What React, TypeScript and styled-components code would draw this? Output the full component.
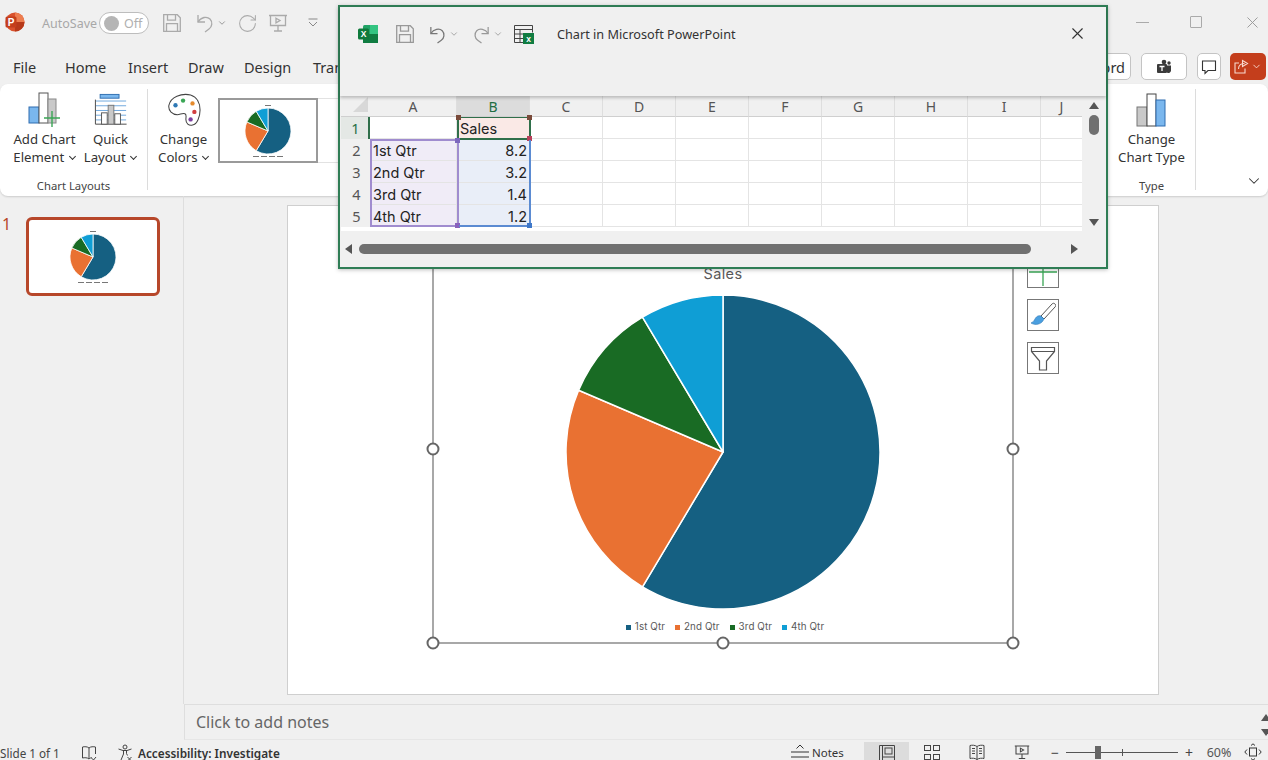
import React from 'react';
import styled, { createGlobalStyle } from 'styled-components';
import { ChevronDown, RotateCw, X } from 'lucide-react';

const UI_FONT = '"Noto Sans", "Open Sans", sans-serif';

const GlobalStyle = createGlobalStyle`
    html, body {
        margin: 0;
        padding: 0;
        background: #f0f0f0;
        overflow: hidden;
    }
    * {
        box-sizing: border-box;
    }
`;

const SALES = [
    { label: '1st Qtr', value: 8.2, color: '#156082' },
    { label: '2nd Qtr', value: 3.2, color: '#e97132' },
    { label: '3rd Qtr', value: 1.4, color: '#196b24' },
    { label: '4th Qtr', value: 1.2, color: '#0f9ed5' },
];

const COLUMNS = ['A', 'B', 'C', 'D', 'E', 'F', 'G', 'H', 'I', 'J'];

const SHEET_ROWS = [
    ['', 'Sales'],
    ['1st Qtr', '8.2'],
    ['2nd Qtr', '3.2'],
    ['3rd Qtr', '1.4'],
    ['4th Qtr', '1.2'],
];

function slicePaths(radius: number) {
    const total = SALES.reduce((sum, s) => sum + s.value, 0);
    let angle = 0;
    return SALES.map(s => {
        const start = angle;
        angle += (s.value / total) * Math.PI * 2;
        const x1 = radius * Math.sin(start);
        const y1 = -radius * Math.cos(start);
        const x2 = radius * Math.sin(angle);
        const y2 = -radius * Math.cos(angle);
        const large = angle - start > Math.PI ? 1 : 0;
        return { color: s.color, d: `M0 0L${x1} ${y1}A${radius} ${radius} 0 ${large} 1 ${x2} ${y2}Z` };
    });
}

function Pie({ radius, stroke }: { radius: number; stroke: number }) {
    const size = radius * 2 + 2;
    return (
        <svg width={size} height={size} viewBox={`${-size / 2} ${-size / 2} ${size} ${size}`}>
            {slicePaths(radius).map(p => (
                <path key={p.color} d={p.d} fill={p.color} stroke="#fff" strokeWidth={stroke} strokeLinejoin="round" />
            ))}
        </svg>
    );
}

function MiniChart({ radius }: { radius: number }) {
    return (
        <MiniChartBox>
            <MiniDash />
            <Pie radius={radius} stroke={0.8} />
            <MiniLegend>
                <MiniDash /><MiniDash /><MiniDash /><MiniDash />
            </MiniLegend>
        </MiniChartBox>
    );
}

function PowerPointLogo() {
    return (
        <svg width="22" height="22" viewBox="0 0 22 22">
            <circle cx="11" cy="11" r="9.5" fill="#d9512c" />
            <path d="M11 1.5a9.5 9.5 0 0 1 9.5 9.5H11z" fill="#ed7d4f" />
            <path d="M11 11h9.5A9.5 9.5 0 0 1 11 20.5z" fill="#b7391a" />
            <rect x="1.5" y="5.5" width="11" height="11" rx="1.5" fill="#c43e1c" />
            <text x="7" y="14.5" textAnchor="middle" fontSize="10" fontWeight="700" fill="#fff" fontFamily="Liberation Sans">P</text>
        </svg>
    );
}

function SaveIcon({ color }: { color: string }) {
    return (
        <svg width="20" height="20" viewBox="0 0 20 20" fill="none" stroke={color} strokeWidth="1.3">
            <path d="M1.7 1.7h13.6l3 3v13.6H1.7z" />
            <path d="M5.5 1.7v5.5h8V1.7M4.5 18.3v-7.6h11v7.6" />
        </svg>
    );
}

function UndoIcon({ color, size, mirror }: { color: string; size: number; mirror?: boolean }) {
    return (
        <svg width={size} height={size} viewBox="0 0 20 20" fill="none" stroke={color} strokeWidth="1.3">
            <g transform={mirror ? 'matrix(-1 0 0 1 20 0)' : undefined}>
                <path d="M3 2v7h7" />
                <path d="M3 9C6 4 12 3 15 6c3 3 2 8-1 10l-4 3" />
            </g>
        </svg>
    );
}

function PresentIcon({ color, size }: { color: string; size: number }) {
    return (
        <svg width={size} height={size} viewBox="0 0 20 20" fill="none" stroke={color} strokeWidth="1.3">
            <path d="M1 2.5h18M2.5 2.5v10h15v-10M10 12.5v5M6 18h8" />
            <path d="M8 5.2l4 2.3-4 2.3z" />
        </svg>
    );
}

function CustomizeIcon() {
    return (
        <svg width="12" height="10" viewBox="0 0 12 10" fill="none" stroke="#888" strokeWidth="1">
            <path d="M1.500 1h9M2 4l4 4 4-4" />
        </svg>
    );
}

function AddChartIcon() {
    return (
        <svg width="36" height="36" viewBox="0 0 36 36">
            <rect x="2" y="16" width="10" height="16" fill="#7ab7ee" stroke="#2f6db0" />
            <rect x="12" y="2" width="9" height="30" fill="#fff" stroke="#555" />
            <rect x="21" y="8" width="8" height="24" fill="#c9c9c9" stroke="#888" />
            <path d="M25 20v16M17 27h16" stroke="#3aa655" strokeWidth="1.4" />
        </svg>
    );
}

function QuickLayoutIcon() {
    return (
        <svg width="34" height="34" viewBox="0 0 36 36" fill="none">
            <rect x="6.5" y="1.500" width="20" height="4" fill="#7ab7ee" stroke="#2f6db0" />
            <path d="M2 8.500h32M2 13.500h32M2 18.500h32M2 23.500h32M2 28.500h32" stroke="#6aa5dc" />
            <path d="M1.500 7v26h33" stroke="#444" />
            <rect x="8" y="21" width="6" height="12" fill="#fff" stroke="#555" />
            <rect x="15" y="13" width="6" height="20" fill="#c9c9c9" stroke="#777" />
            <rect x="22" y="22" width="6" height="11" fill="#fff" stroke="#555" />
        </svg>
    );
}

function PaletteIcon() {
    return (
        <svg width="34" height="34" viewBox="0 0 36 36">
            <path
                d="M2 13C4 4 15 0 25 2c7 2 10 9 10 16 0 7-3 15-8 16-4 1-7-2-7-6 0-3 1-5-1-6-3-1-5 1-8 1-5 0-10-4-9-10z"
                fill="#fff"
                stroke="#444"
                strokeWidth="1.1"
            />
            <circle cx="9" cy="13" r="2.300" fill="#2f79b5" />
            <circle cx="17" cy="8" r="2.300" fill="#3aa655" />
            <circle cx="27" cy="11" r="2.300" fill="#e58a2c" />
            <circle cx="29" cy="20" r="2.300" fill="#d23f3f" />
            <circle cx="25" cy="28" r="2.300" fill="#7b3fa0" />
        </svg>
    );
}

function ChangeTypeIcon() {
    return (
        <svg width="32" height="34" viewBox="0 0 32 34">
            <rect x="1" y="14" width="10" height="19" fill="#c9c9c9" stroke="#777" />
            <rect x="11" y="1" width="9" height="32" fill="#fff" stroke="#444" />
            <rect x="20" y="7" width="9" height="26" fill="#7ab7ee" stroke="#2f6db0" />
        </svg>
    );
}

function TeamsIcon() {
    return (
        <svg width="16" height="16" viewBox="0 0 16 16" fill="#3b3b3b">
            <circle cx="8" cy="3" r="2.300" />
            <circle cx="13" cy="4" r="1.700" />
            <path d="M10 6.500h5v5a2.500 2.500 0 0 1-4 2z" />
            <rect x="1" y="5" width="10" height="9" rx="1" />
            <path d="M3.500 7.500h5M6 7.500v4.500" stroke="#fff" strokeWidth="1.300" />
        </svg>
    );
}

function CommentIcon() {
    return (
        <svg width="16" height="16" viewBox="0 0 16 16" fill="none" stroke="#333" strokeWidth="1.1">
            <path d="M1.500 2h13v9.500H7l-3 3v-3H1.500z" />
        </svg>
    );
}

function ShareIcon() {
    return (
        <svg width="15" height="15" viewBox="0 0 15 15" fill="none" stroke="#f7d9cf" strokeWidth="1.1">
            <path d="M5 4H1v10h10V9.500" />
            <path d="M4.500 10c0-4 3-5.500 6-5.500M8.500 1.500l5 3-5 3z" />
        </svg>
    );
}

function ExcelLogo() {
    return (
        <svg width="20" height="20" viewBox="0 0 20 20">
            <rect x="5" y="1" width="15" height="18" rx="1.500" fill="#21a366" />
            <rect x="12" y="1" width="8" height="9" fill="#33c481" />
            <rect x="5" y="10" width="15" height="9" fill="#107c41" />
            <rect x="0" y="4.500" width="11" height="11" rx="1.500" fill="#0f7a3c" />
            <text x="5.500" y="13" textAnchor="middle" fontSize="8.500" fontWeight="700" fill="#fff" fontFamily="Liberation Sans">X</text>
        </svg>
    );
}

function SheetObjectIcon() {
    return (
        <svg width="20" height="20" viewBox="0 0 20 20" fill="none" stroke="#444" strokeWidth="1">
            <path d="M.5 18.500V1.500h18v7M.5 5.500h18M.5 10h9M.5 14.500h9M6 5.500v13M.5 18.500h9" />
            <rect x="9" y="9" width="11" height="11" fill="#107c41" stroke="none" />
            <text x="14.500" y="17.500" textAnchor="middle" fontSize="8.500" fontWeight="700" fill="#fff" stroke="none" fontFamily="Liberation Sans">x</text>
        </svg>
    );
}

function BrushIcon() {
    return (
        <svg width="26" height="26" viewBox="0 0 26 26">
            <path d="M25 2c-1-1-2-1-3 0L11 14l3 3L25 5c1-1 1-2 0-3z" fill="#fff" stroke="#555" />
            <path d="M11 14c-3-1-5 1-6 3-1 2-2 3-4 4 3 2 8 2 11-1 2-2 2-4 2-3z" fill="#4a9fe0" stroke="#2f79b5" strokeWidth=".6" />
        </svg>
    );
}

function FunnelIcon() {
    return (
        <svg width="26" height="26" viewBox="0 0 26 26" fill="none" stroke="#555" strokeWidth="1.200">
            <path d="M1.500 2.500h23v4l-8 9.500v9h-7v-9l-8-9.500zM1.500 6.500h23" />
        </svg>
    );
}

function BookIcon() {
    return (
        <svg width="16" height="16" viewBox="0 0 16 16" fill="none" stroke="#444" strokeWidth="1">
            <path d="M8 3C6.500 1.500 3.500 1.500 1.500 2v11c2-.5 5-.5 6.500 1 1-1 2-1.300 3-1.400M8 3c1.500-1.500 4.500-1.500 6.500-1v7M8 3v11" />
            <path d="M10.500 13l2 2 2.500-3" />
        </svg>
    );
}

function AccessibilityIcon() {
    return (
        <svg width="18" height="18" viewBox="0 0 18 18" fill="none" stroke="#444" strokeWidth="1">
            <circle cx="8" cy="3" r="2" />
            <path d="M1.500 5l4.500 1.500h4L14.500 5M6.500 6.500v3.500l-2.500 6M9.500 6.500v3l1 2" />
            <path d="M10.500 13l4 4M14.500 13l-4 4" />
        </svg>
    );
}

function NotesIcon() {
    return (
        <svg width="18" height="16" viewBox="0 0 18 16" fill="none" stroke="#333" strokeWidth="1">
            <path d="M5.500 4.500L9 1l3.500 3.500M0 8h18M0 13h18" />
        </svg>
    );
}

function NormalViewIcon() {
    return (
        <svg width="16" height="16" viewBox="0 0 16 16" fill="none" stroke="#444" strokeWidth="1">
            <path d="M.5 1.500h15v16H.5zM3.500 1.500v16M3.500 13h12" />
            <rect x="6" y="4" width="7" height="6" />
        </svg>
    );
}

function SorterIcon() {
    return (
        <svg width="16" height="16" viewBox="0 0 16 16" fill="none" stroke="#444" strokeWidth="1">
            <rect x=".5" y="1.500" width="6" height="5" />
            <rect x="9.500" y="1.500" width="6" height="5" />
            <rect x=".5" y="10.500" width="6" height="5" />
            <rect x="9.500" y="10.500" width="6" height="5" />
        </svg>
    );
}

function ReadingIcon() {
    return (
        <svg width="16" height="16" viewBox="0 0 16 16" fill="none" stroke="#444" strokeWidth="1">
            <path d="M8 2.500C6 1 3 1 1 1.500v13c2-.5 5-.5 7 1 2-1.500 5-1.500 7-1v-13c-2-.5-5-.5-7 1zM8 2.500v13" />
            <path d="M3 4.500h3M3 7h3M3 9.500h3M10 4.500h3M10 7h3M10 9.500h3" />
        </svg>
    );
}

function FitIcon() {
    return (
        <svg width="18" height="18" viewBox="0 0 18 18" fill="none" stroke="#333" strokeWidth="1">
            <rect x="5.500" y="5" width="7" height="8" />
            <path d="M3 6.500L.8 9 3 11.500M15 6.500L17.200 9 15 11.500M7 2.500L9 .8l2 1.700M7 15.500L9 17.200l2-1.700" />
        </svg>
    );
}

export default function App() {
    return (
        <Page>
            <GlobalStyle />
            <TitleBar>
                <LogoSlot><PowerPointLogo /></LogoSlot>
                <AutoSaveLabel>AutoSave</AutoSaveLabel>
                <Toggle><ToggleKnob /><ToggleText>Off</ToggleText></Toggle>
                <QuickTools>
                    <SaveIcon color="#aaa" />
                    <UndoPair>
                        <UndoIcon color="#aaa" size={20} />
                        <ChevronDown size={10} color="#888" />
                    </UndoPair>
                    <RotateCw size={21} color="#aaa" strokeWidth={1.2} />
                    <PresentIcon color="#aaa" size={20} />
                    <CustomizeSlot><CustomizeIcon /></CustomizeSlot>
                </QuickTools>
                <WindowControls>
                    <MinimizeMark />
                    <MaximizeMark />
                    <X size={19} color="#999" strokeWidth={1.2} />
                </WindowControls>
            </TitleBar>

            <TabBar>
                <Tabs>
                    <Tab $width={52}>File</Tab>
                    <Tab $width={63}>Home</Tab>
                    <Tab $width={60}>Insert</Tab>
                    <Tab $width={56}>Draw</Tab>
                    <Tab $width={69}>Design</Tab>
                    <Tab $width={90}>Transitions</Tab>
                </Tabs>
                <TabActions>
                    <RecordButton $width={70}>Record</RecordButton>
                    <ActionButton $width={46}><TeamsIcon /></ActionButton>
                    <ActionButton $width={24}><CommentIcon /></ActionButton>
                    <ShareButton><ShareIcon /><ChevronDown size={11} color="#f7d9cf" /></ShareButton>
                </TabActions>
            </TabBar>

            <Ribbon>
                <RibbonGroup $width={148}>
                    <RibbonButtons>
                        <RibbonButton $width={74}>
                            <IconSlot><AddChartIcon /></IconSlot>
                            <ButtonLabel>Add Chart<br />Element <Caret /></ButtonLabel>
                        </RibbonButton>
                        <RibbonButton $width={58}>
                            <IconSlot><QuickLayoutIcon /></IconSlot>
                            <ButtonLabel>Quick<br />Layout <Caret /></ButtonLabel>
                        </RibbonButton>
                    </RibbonButtons>
                    <GroupLabel>Chart Layouts</GroupLabel>
                </RibbonGroup>
                <StylesGroup>
                    <RibbonButton $width={69}>
                        <IconSlot><PaletteIcon /></IconSlot>
                        <ButtonLabel>Change<br />Colors <Caret /></ButtonLabel>
                    </RibbonButton>
                    <Gallery>
                        <GalleryItem><MiniChart radius={23} /></GalleryItem>
                    </Gallery>
                </StylesGroup>
                <RibbonGroup $width={88}>
                    <RibbonButtons>
                        <RibbonButton $width={80}>
                            <IconSlot><ChangeTypeIcon /></IconSlot>
                            <ButtonLabel>Change<br />Chart Type</ButtonLabel>
                        </RibbonButton>
                    </RibbonButtons>
                    <GroupLabel>Type</GroupLabel>
                </RibbonGroup>
                <CollapseSlot><ChevronDown size={18} color="#333" strokeWidth={1.4} /></CollapseSlot>
            </Ribbon>

            <Workspace>
                <ThumbPane>
                    <ThumbNumber>1</ThumbNumber>
                    <Thumb><MiniChart radius={23} /></Thumb>
                </ThumbPane>
                <Editor>
                    <Slide>
                        <ChartFrame>
                            <ChartTitle>Sales</ChartTitle>
                            <PieSlot><Pie radius={157} stroke={1.5} /></PieSlot>
                            <Legend>
                                {SALES.map(s => (
                                    <LegendItem key={s.label}>
                                        <LegendSwatch $color={s.color} />
                                        {s.label}
                                    </LegendItem>
                                ))}
                            </Legend>
                            <Handle $x={0} $y={0.5} />
                            <Handle $x={1} $y={0.5} />
                            <Handle $x={0} $y={1} />
                            <Handle $x={0.5} $y={1} />
                            <Handle $x={1} $y={1} />
                        </ChartFrame>
                        <ChartTools>
                            <ChartTool>
                                <svg width="30" height="30" viewBox="0 0 30 30" stroke="#3aa655" strokeWidth="1.3">
                                    <path d="M15 1v28M1 15h28" />
                                </svg>
                            </ChartTool>
                            <ChartTool><BrushIcon /></ChartTool>
                            <ChartTool><FunnelIcon /></ChartTool>
                        </ChartTools>
                    </Slide>
                </Editor>
            </Workspace>

            <NotesPane>
                Click to add notes
                <NotesScroll>
                    <ScrollArrow $dir="up" />
                    <ScrollArrow $dir="down" />
                </NotesScroll>
            </NotesPane>

            <StatusBar>
                <StatusLeft>
                    <SlideCount>Slide 1 of 1</SlideCount>
                    <BookSlot><BookIcon /></BookSlot>
                    <AccessibilityIcon />
                    <AccessibilityText>Accessibility: Investigate</AccessibilityText>
                </StatusLeft>
                <StatusRight>
                    <NotesToggle><NotesIcon />Notes</NotesToggle>
                    <ViewButton $active><NormalViewIcon /></ViewButton>
                    <ViewButton><SorterIcon /></ViewButton>
                    <ViewButton><ReadingIcon /></ViewButton>
                    <ViewButton><PresentIcon color="#444" size={16} /></ViewButton>
                    <ZoomSign>−</ZoomSign>
                    <ZoomTrack>
                        <ZoomTick />
                        <ZoomThumb />
                    </ZoomTrack>
                    <ZoomSign>+</ZoomSign>
                    <ZoomValue>60%</ZoomValue>
                    <FitIcon />
                </StatusRight>
            </StatusBar>

            <ExcelWindow>
                <ExcelTitleBar>
                    <ExcelTools>
                        <ExcelLogo />
                        <SaveIcon color="#999" />
                        <ToolPair>
                            <UndoIcon color="#777" size={19} />
                            <ChevronDown size={10} color="#999" />
                        </ToolPair>
                        <ToolPair>
                            <UndoIcon color="#999" size={19} mirror />
                            <ChevronDown size={10} color="#999" />
                        </ToolPair>
                        <SheetObjectIcon />
                    </ExcelTools>
                    <ExcelTitle>Chart in Microsoft PowerPoint</ExcelTitle>
                    <X size={19} color="#333" strokeWidth={1.4} />
                </ExcelTitleBar>
                <SheetArea>
                    <Sheet>
                        <CornerCell />
                        {COLUMNS.map(c => (
                            <ColumnHeader key={c} $active={c === 'B'}>{c}</ColumnHeader>
                        ))}
                        {SHEET_ROWS.map((row, r) => (
                            <React.Fragment key={r}>
                                <RowHeader $active={r === 0}>{r + 1}</RowHeader>
                                {COLUMNS.map((c, i) => (
                                    <Cell
                                        key={c}
                                        $tone={r === 0 ? (i === 1 ? 'pink' : 'none') : i === 0 ? 'purple' : i === 1 ? 'blue' : 'none'}
                                        $right={i === 1 && r > 0}
                                    >
                                        {row[i] ?? ''}
                                    </Cell>
                                ))}
                            </React.Fragment>
                        ))}
                        <SeriesRange>
                            <RangeCorner $side="left" $edge="top" $color="#7a4a3a" />
                            <RangeCorner $side="right" $edge="top" $color="#7a4a3a" />
                            <RangeCorner $side="right" $edge="bottom" $color="#b8405a" />
                        </SeriesRange>
                        <CategoryRange>
                            <RangeCorner $side="right" $edge="top" $color="#7d68bd" />
                            <RangeCorner $side="right" $edge="bottom" $color="#8a62bd" />
                        </CategoryRange>
                        <ValueRange>
                            <RangeCorner $side="right" $edge="bottom" $color="#3f78c9" />
                        </ValueRange>
                    </Sheet>
                    <VerticalScroll>
                        <ScrollArrow $dir="up" />
                        <VerticalThumb />
                        <ScrollSpacer />
                        <ScrollArrow $dir="down" />
                    </VerticalScroll>
                </SheetArea>
                <HorizontalScroll>
                    <ScrollArrow $dir="left" />
                    <HorizontalThumb />
                    <ScrollArrow $dir="right" />
                </HorizontalScroll>
            </ExcelWindow>
        </Page>
    );
}

const Page = styled.div`
    position: relative;
    width: 1268px;
    height: 760px;
    display: flex;
    flex-direction: column;
    overflow: hidden;
    background: #f0f0f0;
    font-family: ${UI_FONT};
    color: #333;
`;

const TitleBar = styled.div`
    height: 52px;
    flex: none;
    display: flex;
    align-items: center;
    padding: 0 6px 6px 4px;
`;

const LogoSlot = styled.div`
    width: 38px;
    margin-top: -2px;
    display: flex;
`;

const AutoSaveLabel = styled.span`
    width: 57px;
    font-size: 12.5px;
    color: #a8a8a8;
`;

const Toggle = styled.div`
    width: 50px;
    height: 22px;
    display: flex;
    align-items: center;
    gap: 5px;
    padding-left: 4px;
    background: #fff;
    border: 1px solid #bdbdbd;
    border-radius: 11px;
`;

const ToggleKnob = styled.div`
    width: 15px;
    height: 15px;
    border-radius: 50%;
    background: #b5b5b5;
`;

const ToggleText = styled.span`
    font-size: 12.5px;
    color: #b0b0b0;
`;

const QuickTools = styled.div`
    display: flex;
    align-items: center;
    gap: 10px;
    margin-left: 13px;
`;

const ToolPair = styled.div`
    display: flex;
    align-items: center;
    gap: 2px;
`;

const UndoPair = styled(ToolPair)`
    margin-left: 3px;
`;

const CustomizeSlot = styled.div`
    margin-left: 9px;
    display: flex;
`;

const WindowControls = styled.div`
    margin: -2px 0 0 auto;
    display: flex;
    align-items: center;
    gap: 41px;
`;

const MinimizeMark = styled.div`
    width: 13px;
    border-top: 1px solid #aaa;
`;

const MaximizeMark = styled.div`
    width: 12px;
    height: 12px;
    border: 1px solid #aaa;
    border-radius: 1px;
`;

const TabBar = styled.div`
    height: 32px;
    flex: none;
    display: flex;
    align-items: center;
    justify-content: space-between;
    padding: 0 2px 3px 13px;
`;

const Tabs = styled.div`
    display: flex;
    font-size: 14.5px;
`;

const Tab = styled.span<{ $width: number }>`
    width: ${props => props.$width}px;
    color: #333;
`;

const TabActions = styled.div`
    display: flex;
    align-items: center;
    gap: 10px;
`;

const ActionButton = styled.div<{ $width: number }>`
    width: ${props => props.$width}px;
    height: 27px;
    display: flex;
    align-items: center;
    justify-content: center;
    background: #fff;
    border: 1px solid #c4c4c4;
    border-radius: 5px;
    font-size: 14.5px;
`;

const RecordButton = styled(ActionButton)`
    justify-content: flex-end;
    padding-right: 5px;
`;

const ShareButton = styled.div`
    width: 36px;
    height: 27px;
    margin-left: -1px;
    display: flex;
    align-items: center;
    justify-content: center;
    gap: 2px;
    background: #c43e1c;
    border-radius: 5px;
`;

const Ribbon = styled.div`
    height: 112px;
    flex: none;
    display: flex;
    background: #fff;
    border-radius: 8px;
    box-shadow: 0 1px 2px rgba(0, 0, 0, 0.15);
    padding-top: 5px;
`;

const RibbonGroup = styled.div<{ $width: number }>`
    width: ${props => props.$width}px;
    flex: none;
    display: flex;
    flex-direction: column;
    align-items: center;
    border-right: 1px solid #dcdcdc;
    margin-bottom: 6px;
`;

const RibbonButtons = styled.div`
    flex: 1;
    display: flex;
    justify-content: center;
`;

const RibbonButton = styled.div<{ $width: number }>`
    width: ${props => props.$width}px;
    flex: none;
    display: flex;
    flex-direction: column;
    align-items: center;
`;

const IconSlot = styled.div`
    height: 38px;
    display: flex;
    align-items: flex-end;
    justify-content: center;
`;

const ButtonLabel = styled.div`
    margin-top: 3px;
    font-size: 13.2px;
    line-height: 18px;
    text-align: center;
    color: #333;
    white-space: nowrap;
`;

const Caret = styled.span`
    display: inline-block;
    width: 5px;
    height: 5px;
    margin: 0 1px 3px 2px;
    border-right: 1px solid #333;
    border-bottom: 1px solid #333;
    transform: rotate(45deg);
`;

const GroupLabel = styled.div`
    font-size: 11.3px;
    line-height: 16px;
    margin-bottom: -4px;
    color: #444;
`;

const StylesGroup = styled.div`
    flex: 1;
    min-width: 0;
    display: flex;
    align-items: flex-start;
    padding-left: 1px;
`;

const Gallery = styled.div`
    flex: 1;
    margin-top: 9px;
    height: 65px;
    border-top: 1px solid #e2e2e2;
    border-bottom: 1px solid #e2e2e2;
`;

const GalleryItem = styled.div`
    width: 100px;
    height: 65px;
    margin-top: -1px;
    background: #fff;
    border: 2px solid #9a9a9a;
`;

const CollapseSlot = styled.div`
    width: 72px;
    flex: none;
    display: flex;
    align-items: flex-end;
    justify-content: flex-end;
    padding: 0 5px 6px 0;
`;

const MiniChartBox = styled.div`
    height: 100%;
    display: flex;
    flex-direction: column;
    align-items: center;
    justify-content: center;
    gap: 1px;
`;

const MiniDash = styled.div`
    width: 6px;
    height: 1px;
    background: #777;
`;

const MiniLegend = styled.div`
    display: flex;
    gap: 2px;
`;

const Workspace = styled.div`
    flex: 1;
    min-height: 0;
    display: flex;
`;

const ThumbPane = styled.div`
    width: 184px;
    flex: none;
    display: flex;
    align-items: flex-start;
    padding: 18px 0 0 2px;
    border-right: 1px solid #dedede;
`;

const ThumbNumber = styled.span`
    width: 24px;
    font-size: 16px;
    line-height: 20px;
    color: #b7472a;
`;

const Thumb = styled.div`
    width: 134px;
    height: 79px;
    margin-top: 3px;
    background: #fff;
    border: 3px solid #b7472a;
    border-radius: 6px;
`;

const Editor = styled.div`
    flex: 1;
    display: flex;
    justify-content: center;
    padding: 9px 6px 10px 0;
`;

const Slide = styled.div`
    position: relative;
    width: 872px;
    height: 490px;
    background: #fff;
    border: 1px solid #cfcfcf;
`;

const ChartFrame = styled.div`
    position: absolute;
    left: 144px;
    top: 48px;
    width: 582px;
    height: 390px;
    display: flex;
    flex-direction: column;
    align-items: center;
    border: 2px solid #a8a8a8;
`;

const ChartTitle = styled.div`
    margin-top: 9px;
    font-family: Inter, "Liberation Sans", sans-serif;
    font-size: 14.5px;
    letter-spacing: 0.4px;
    line-height: 18px;
    color: #595959;
`;

const PieSlot = styled.div`
    height: 316px;
    margin-top: 11px;
    display: flex;
`;

const Legend = styled.div`
    margin: 11px 0 0 4px;
    display: flex;
    gap: 10px;
    font-family: Inter, "Liberation Sans", sans-serif;
    font-size: 9.8px;
    letter-spacing: 0.1px;
    line-height: 12px;
    color: #595959;
`;

const LegendItem = styled.div`
    display: flex;
    align-items: center;
    gap: 4px;
`;

const LegendSwatch = styled.div<{ $color: string }>`
    width: 5px;
    height: 5px;
    background: ${props => props.$color};
`;

/* centred on the middle of the 2px frame line, so 1px outside the padding box */
const Handle = styled.div<{ $x: number; $y: number }>`
    position: absolute;
    left: calc(-1px + (100% + 2px) * ${props => props.$x});
    top: calc(-1px + (100% + 2px) * ${props => props.$y});
    width: 13px;
    height: 13px;
    transform: translate(-50%, -50%);
    background: #fff;
    border: 2px solid #666;
    border-radius: 50%;
`;

const ChartTools = styled.div`
    position: absolute;
    left: 739px;
    top: 50px;
    display: flex;
    flex-direction: column;
    gap: 11px;
`;

const ChartTool = styled.div`
    width: 32px;
    height: 32px;
    display: flex;
    align-items: center;
    justify-content: center;
    background: #fff;
    border: 1px solid #777;
`;

const NotesPane = styled.div`
    position: relative;
    height: 36px;
    flex: none;
    margin-left: 184px;
    padding-left: 11px;
    font-size: 16px;
    line-height: 34px;
    color: #666;
    border-top: 1px solid #dedede;
    border-left: 1px solid #dedede;
    border-bottom: 1px solid #e6e6e6;
`;

const NotesScroll = styled.div`
    position: absolute;
    right: -3px;
    top: 9px;
    display: flex;
    flex-direction: column;
    gap: 8px;
`;

const StatusBar = styled.div`
    height: 20px;
    flex: none;
    display: flex;
    align-items: flex-start;
    justify-content: space-between;
    padding: 2px 6px 0 0;
    font-size: 11.7px;
`;

const StatusLeft = styled.div`
    display: flex;
    align-items: center;
    height: 20px;
    padding-top: 2px;
`;

const SlideCount = styled.span`
    width: 81px;
    color: #444;
`;

const BookSlot = styled.div`
    width: 36px;
    display: flex;
`;

const AccessibilityText = styled.span`
    margin-left: 3px;
    font-weight: 600;
    font-size: 11.8px;
    color: #333;
`;

const StatusRight = styled.div`
    display: flex;
    align-items: center;
    height: 20px;
`;

const NotesToggle = styled.div`
    width: 73px;
    display: flex;
    align-items: center;
    gap: 3px;
    font-size: 11.5px;
`;

const ViewButton = styled.div<{ $active?: boolean }>`
    width: 45px;
    height: 20px;
    display: flex;
    align-items: center;
    justify-content: center;
    background: ${props => (props.$active ? '#dcdcdc' : 'transparent')};
`;

const ZoomSign = styled.span`
    width: 22px;
    text-align: center;
    font-size: 14px;
    color: #444;
`;

const ZoomTrack = styled.div`
    position: relative;
    width: 112px;
    height: 1px;
    background: #555;
`;

const ZoomTick = styled.div`
    position: absolute;
    left: 56px;
    top: -3px;
    width: 1px;
    height: 7px;
    background: #555;
`;

const ZoomThumb = styled.div`
    position: absolute;
    left: 29px;
    top: -6px;
    width: 6px;
    height: 13px;
    background: #666;
`;

const ZoomValue = styled.span`
    width: 38px;
    margin-right: 6px;
    text-align: center;
    font-size: 12.5px;
    color: #555;
`;

const ExcelWindow = styled.div`
    position: absolute;
    left: 338px;
    top: 5px;
    width: 770px;
    height: 264px;
    display: flex;
    flex-direction: column;
    background: #f0f0f0;
    border: 2px solid #2f7d55;
    box-shadow: 0 1px 4px rgba(0, 0, 0, 0.25);
`;

const ExcelTitleBar = styled.div`
    position: relative;
    z-index: 1;
    height: 89px;
    flex: none;
    display: flex;
    align-items: flex-start;
    padding: 17px 19px 0 18px;
    box-shadow: 0 2px 3px rgba(0, 0, 0, 0.22);
`;

const ExcelTools = styled.div`
    width: 199px;
    display: flex;
    align-items: center;
    gap: 13px;
    & > :first-child {
        margin-right: 4px;
    }
    & > :last-child {
        margin-left: -2px;
    }
`;

const ExcelTitle = styled.div`
    flex: 1;
    font-size: 12.7px;
    line-height: 20px;
    color: #333;
`;

const SheetArea = styled.div`
    height: 135px;
    flex: none;
    display: flex;
    padding-left: 1px;
`;

const Sheet = styled.div`
    position: relative;
    width: 742px;
    height: 135px;
    overflow: hidden;
    display: grid;
    grid-template-columns: 29px 87px repeat(8, 73px) 42px;
    grid-template-rows: 21px repeat(5, 22px) 4px;
    background: #fff;
`;

const CornerCell = styled.div`
    position: relative;
    background: #f0f0f0;
    border-bottom: 1px solid #cfcfcf;
    &::after {
        content: '';
        position: absolute;
        right: 2px;
        bottom: 4px;
        border-style: solid;
        border-width: 0 0 15px 15px;
        border-color: transparent transparent #d8d8d8 transparent;
    }
`;

const ColumnHeader = styled.div<{ $active: boolean }>`
    display: flex;
    align-items: center;
    justify-content: center;
    font-size: 14px;
    color: ${props => (props.$active ? '#1f6e43' : '#555')};
    background: ${props => (props.$active ? '#dcdcdc' : '#f0f0f0')};
    border-right: 1px solid #dedede;
    border-bottom: 1px solid #cfcfcf;
`;

const RowHeader = styled.div<{ $active: boolean }>`
    display: flex;
    align-items: center;
    justify-content: center;
    padding-left: 2px;
    font-size: 14.5px;
    color: ${props => (props.$active ? '#1f6e43' : '#555')};
    background: ${props => (props.$active ? '#e4e8e5' : '#f0f0f0')};
    border-right: ${props => (props.$active ? '2px solid #2f6f4a' : 'none')};
`;

const TONES: Record<string, string> = {
    none: '#fff',
    pink: '#fae9e6',
    purple: '#f0ecf7',
    blue: '#e9eef8',
};

const Cell = styled.div<{ $tone: string; $right: boolean }>`
    display: flex;
    align-items: center;
    justify-content: ${props => (props.$right ? 'flex-end' : 'flex-start')};
    padding: 1px 2px 0 3px;
    font-family: Inter, "Liberation Sans", sans-serif;
    font-size: 14.5px;
    color: #222;
    background: ${props => TONES[props.$tone]};
    border-right: 1px solid #e4e4e4;
    border-bottom: 1px solid #e4e4e4;
`;

const SeriesRange = styled.div`
    position: absolute;
    left: 116px;
    top: 21px;
    width: 74px;
    height: 23px;
    border: 2px solid #2f6f4a;
    border-top-width: 1px;
`;

const CategoryRange = styled.div`
    position: absolute;
    left: 29px;
    top: 43px;
    width: 89px;
    height: 88px;
    border: 2px solid #a08ccf;
`;

const ValueRange = styled.div`
    position: absolute;
    left: 118px;
    top: 44px;
    width: 72px;
    height: 87px;
    border-right: 2px solid #5b8bd2;
    border-bottom: 2px solid #5b8bd2;
`;

const RangeCorner = styled.div<{ $side: 'left' | 'right'; $edge: 'top' | 'bottom'; $color: string }>`
    position: absolute;
    ${props => props.$side}: -3px;
    ${props => props.$edge}: -3px;
    width: 5px;
    height: 5px;
    background: ${props => props.$color};
`;

const VerticalScroll = styled.div`
    width: 24px;
    display: flex;
    flex-direction: column;
    align-items: center;
    padding-top: 6px;
`;

const VerticalThumb = styled.div`
    width: 10px;
    height: 20px;
    margin-top: 6px;
    background: #707070;
    border-radius: 5px;
`;

const ScrollSpacer = styled.div`
    flex: 1;
`;

const HorizontalScroll = styled.div`
    flex: 1;
    display: flex;
    align-items: center;
    padding: 0 26px 0 5px;
`;

const HorizontalThumb = styled.div`
    width: 672px;
    height: 10px;
    margin: 0 40px 0 7px;
    background: #707070;
    border-radius: 5px;
`;

const ScrollArrow = styled.div<{ $dir: 'up' | 'down' | 'left' | 'right' }>`
    width: 0;
    height: 0;
    flex: none;
    border-style: solid;
    border-color: transparent;
    ${props => {
        switch (props.$dir) {
            case 'up':
                return 'border-width: 0 5.5px 7px; border-bottom-color: #555;';
            case 'down':
                return 'border-width: 7px 5.5px 0; border-top-color: #555; margin-bottom: 5px;';
            case 'left':
                return 'border-width: 5.5px 7px 5.5px 0; border-right-color: #555;';
            default:
                return 'border-width: 5.5px 0 5.5px 7px; border-left-color: #555;';
        }
    }}
`;
